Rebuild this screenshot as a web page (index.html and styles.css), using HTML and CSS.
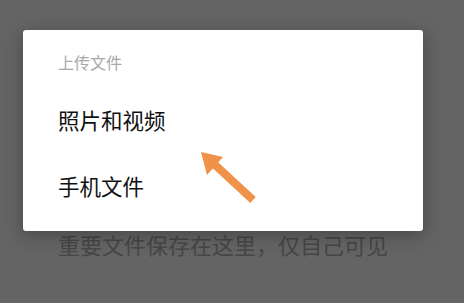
FILE: index.html
```html
<!DOCTYPE html>
<html lang="zh-CN">

<head>
  <meta charset="UTF-8">
  <meta name="viewport" content="width=device-width, initial-scale=1.0">
  <title>上传文件</title>
  <link rel="stylesheet" href="styles.css">
</head>

<body>
  <div class="page">
    <p class="page-tip">重要文件保存在这里，仅自己可见</p>
  </div>

  <div class="mask"></div>

  <div class="sheet">
    <div class="sheet-title">上传文件</div>
    <div class="sheet-item">照片和视频</div>
    <div class="sheet-item">手机文件</div>
  </div>

  <svg class="hint-arrow" width="464" height="303" viewBox="0 0 464 303">
    <line x1="253" y1="200" x2="213" y2="163" stroke="#f0924a" stroke-width="8" />
    <polygon points="201,152 223,157 207,175" fill="#f0924a" />
  </svg>
</body>

</html>
```

FILE: styles.css
```css
* {
  margin: 0;
  padding: 0;
}

body {
  width: 464px;
  height: 303px;
  overflow: hidden;
  background: #fff;
  font-family: "Noto Sans CJK SC", "Noto Sans", sans-serif;
  position: relative;
}

.page {
  padding: 229px 0 0 58px;
  height: 303px;
  box-sizing: border-box;
  background: #dedede;
}

.page-tip {
  font-size: 22px;
  line-height: 30px;
  color: #9c9c9c;
}

.mask {
  position: absolute;
  left: 0;
  top: 0;
  width: 100%;
  height: 100%;
  background: rgba(0, 0, 0, 0.55);
}

.sheet {
  position: absolute;
  left: 23px;
  top: 30px;
  width: 400px;
  height: 201px;
  box-sizing: border-box;
  padding: 21px 0 0 35px;
  background: #fff;
  border-radius: 3px;
  box-shadow: 0 4px 18px rgba(0, 0, 0, 0.3);
}

.sheet-title {
  font-size: 16px;
  line-height: 22px;
  color: #a8a8a8;
  margin-bottom: 13px;
}

.sheet-item {
  height: 66px;
  display: flex;
  align-items: center;
  font-size: 21.5px;
  color: #111;
}

.hint-arrow {
  position: absolute;
  left: 0;
  top: 0;
}
```
